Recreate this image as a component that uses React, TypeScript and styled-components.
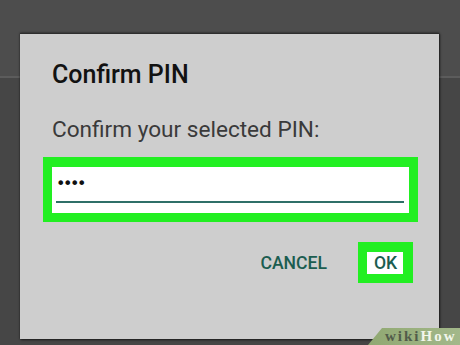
import React from "react";
import styled, { createGlobalStyle } from "styled-components";

const Global = createGlobalStyle`
  html, body { margin: 0; padding: 0; }
  body { font-family: Roboto, "Noto Sans", sans-serif; }
`;

const Page = styled.div`
  position: relative;
  width: 460px;
  height: 345px;
  overflow: hidden;
  background: linear-gradient(
    to bottom,
    #4d4d4d 0px,
    #4d4d4d 76px,
    #5c5c5c 76px,
    #5c5c5c 78px,
    #464646 78px,
    #464646 100%
  );
  padding: 33px 0 0 20px;
  box-sizing: border-box;
`;

const Dialog = styled.div`
  width: 419px;
  height: 306px;
  box-sizing: border-box;
  background: #cecece;
  border-top: 1px solid #2e2e2e;
  box-shadow: 0 0 2px rgba(0, 0, 0, 0.6), 1px 1px 2px rgba(0, 0, 0, 0.5);
  padding: 26px 21px 0 23px;
  display: flex;
  flex-direction: column;
`;

const Title = styled.h2`
  margin: 0 0 0 9px;
  font-family: Roboto, sans-serif;
  font-weight: 500;
  font-size: 25px;
  line-height: 30px;
  color: #121212;
`;

const Message = styled.p`
  margin: 27px 0 0 9px;
  font-family: Roboto, sans-serif;
  font-weight: 400;
  font-size: 22.6px;
  line-height: 26px;
  color: #3a3a3a;
`;

const Highlight = styled.div<{ $t?: number; $r?: number; $b?: number; $l?: number }>`
  box-sizing: border-box;
  background: #ffffff;
  border-style: solid;
  border-color: #22ef22;
  border-width: ${(p) => `${p.$t ?? 9}px ${p.$r ?? 9}px ${p.$b ?? 9}px ${p.$l ?? 9}px`};
`;

const PinBox = styled(Highlight)`
  margin-top: 14px;
  width: 375px;
  height: 65px;
  padding: 6px 5px 0 4px;
  display: flex;
  flex-direction: column;
`;

const PinValue = styled.div`
  margin-left: 0px;
  height: 22px;
  font-family: "DejaVu Sans", sans-serif;
  font-size: 16px;
  line-height: 22px;
  letter-spacing: -2.4px;
  color: #111;
`;

const Underline = styled.div`
  margin-top: 6px;
  height: 2px;
  background: #2f6f68;
`;

const Actions = styled.div`
  margin-top: 20px;
  display: flex;
  justify-content: flex-end;
  align-items: center;
  gap: 31px;
  padding-right: 5px;
`;

const ActionText = styled.span`
  font-family: Roboto, sans-serif;
  font-weight: 500;
  font-size: 17.6px;
  line-height: 22px;
  color: #1b5d50;
`;

const OkBox = styled(Highlight)`
  width: 55px;
  height: 41px;
  display: flex;
  align-items: center;
  justify-content: center;
  padding-left: 1px;
`;

const Watermark = styled.div`
  position: absolute;
  right: 0;
  bottom: 0;
  width: 92px;
  height: 17px;
  background: linear-gradient(to right, #90a872, #a3b88a);
  clip-path: polygon(14px 0, 100% 0, 100% 100%, 0 100%);
  display: flex;
  align-items: flex-end;
  padding-left: 17px;
  box-sizing: border-box;
  font-family: "Liberation Serif", "DejaVu Serif", serif;
  font-weight: 700;
  font-size: 15px;
  line-height: 17px;
  letter-spacing: 2px;
`;

const WikiPart = styled.span`
  color: #525c4a;
`;

const HowPart = styled.span`
  color: #f2f6ec;
`;

export default function App() {
  return (
    <>
      <Global />
      <Page>
        <Dialog>
          <Title>Confirm PIN</Title>
          <Message>Confirm your selected PIN:</Message>
          <PinBox $t={10}>
            <PinValue>••••</PinValue>
            <Underline />
          </PinBox>
          <Actions>
            <ActionText>CANCEL</ActionText>
            <OkBox $l={9} $t={10} $r={10} $b={9}>
              <ActionText>OK</ActionText>
            </OkBox>
          </Actions>
        </Dialog>
        <Watermark>
          <WikiPart>wiki</WikiPart>
          <HowPart>How</HowPart>
        </Watermark>
      </Page>
    </>
  );
}
